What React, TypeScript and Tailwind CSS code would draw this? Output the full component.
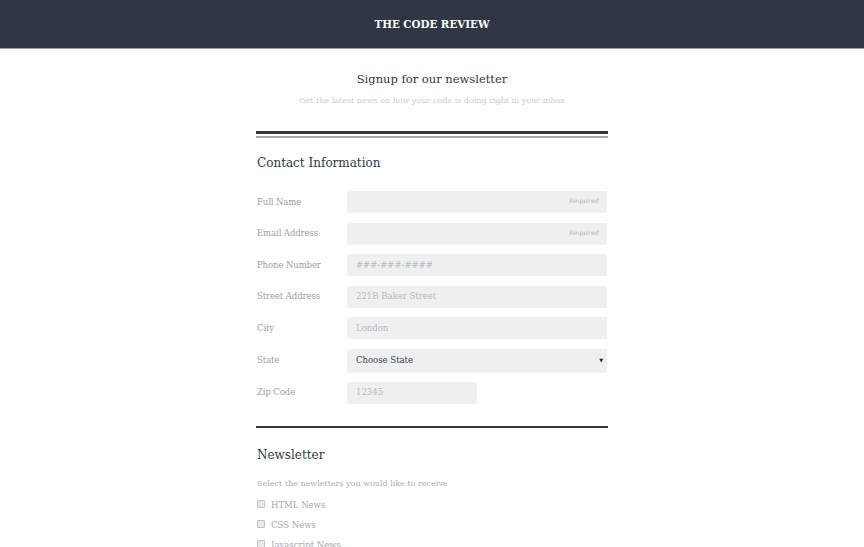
import React from "react";

const serif = { fontFamily: '"DejaVu Serif", "Liberation Serif", serif' };

function Row({ label, children }: { label: string; children: React.ReactNode }) {
  return (
    <div className="flex items-center h-[22px]">
      <div className="w-[91px] pl-[1px] text-[8.5px] tracking-[-0.1px] text-[#9a9ea5]">{label}</div>
      {children}
    </div>
  );
}

function Input({ placeholder, required, w = "w-[260px]" }: { placeholder?: string; required?: boolean; w?: string }) {
  return (
    <div className={`${w} h-[22px] bg-[#eeeff1] rounded-[2px] flex items-center pl-[9px] pr-[8px] text-[8.5px] text-[#b4b8be]`}>
      <span className="flex-1">{placeholder}</span>
      {required && <span className="italic text-[6.5px] text-[#aeb2b8]">Required</span>}
    </div>
  );
}

function Check({ label }: { label: string }) {
  return (
    <div className="flex items-center h-[20px] text-[8.5px] text-[#a3a7ad]">
      <span className="w-[8px] h-[8px] border border-[#bfc2c6] bg-[#e9eaec] rounded-[1px] mr-[6px] ml-[1px] -mt-[3px]" />
      <span>{label}</span>
    </div>
  );
}

export default function App() {
  return (
    <div className="w-[864px] h-[547px] overflow-hidden bg-white" style={serif}>
      <div className="h-[49px] bg-[#2f3744] border-b border-[#9aa0a8] flex items-center justify-center">
        <span className="text-white font-bold text-[10.3px] mt-[1px]">THE CODE REVIEW</span>
      </div>
      <div className="w-[352px] mx-auto pl-[0px]">
        <div className="text-center mt-[22px] text-[11.5px] text-[#2f3744]">Signup for our newsletter</div>
        <div className="text-center mt-[7px] text-[8px] text-[#c9ccd0]">Get the latest news on how your code is doing right in your inbox</div>
        <div className="mt-[24px] h-[3px] bg-[#2f3744]" />
        <div className="mt-[2px] h-[2px] bg-[#a6a9ad]" />
        <div className="mt-[16px] text-[12px] text-[#2f3744] pl-[1px]">Contact Information</div>
        <div className="mt-[19px] flex flex-col gap-[9.5px]">
          <Row label="Full Name"><Input required /></Row>
          <Row label="Email Address"><Input required /></Row>
          <Row label="Phone Number"><Input placeholder="###-###-####" /></Row>
          <Row label="Street Address"><Input placeholder="221B Baker Street" /></Row>
          <Row label="City"><Input placeholder="London" /></Row>
          <div className="flex items-center h-[24px]">
            <div className="w-[91px] pl-[1px] text-[8.5px] tracking-[-0.1px] text-[#9a9ea5]">State</div>
            <div className="w-[260px] h-[24px] bg-[#eeeff1] rounded-[2px] flex items-center pl-[9px] pr-[4px] text-[8.5px] text-[#3a404a]">
              <span className="flex-1">Choose State</span>
              <span className="text-[5px] text-[#222]">▼</span>
            </div>
          </div>
        </div>
        <div className="mt-[9px]">
          <Row label="Zip Code"><Input placeholder="12345" w="w-[130px]" /></Row>
        </div>
        <div className="mt-[22px] h-[2px] bg-[#2f3744]" />
        <div className="mt-[18px] text-[12px] text-[#2f3744] pl-[1px]">Newsletter</div>
        <div className="mt-[14px] text-[8px] text-[#a9adb3] pl-[1px]">Select the newletters you would like to receive</div>
        <div className="mt-[6px] flex flex-col">
          <Check label="HTML News" />
          <Check label="CSS News" />
          <Check label="Javascript News" />
        </div>
      </div>
    </div>
  );
}
